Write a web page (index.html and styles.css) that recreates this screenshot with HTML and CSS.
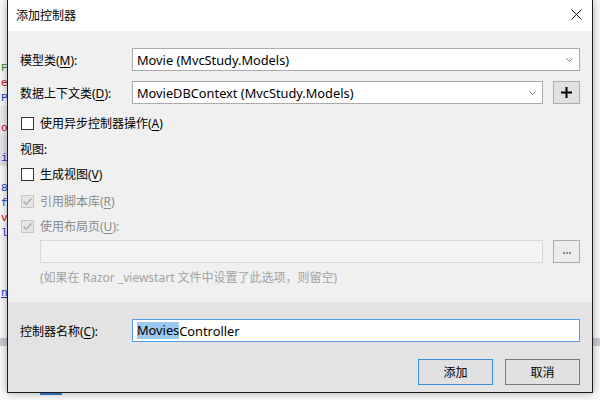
FILE: index.html
```html
<!DOCTYPE html>
<html lang="zh-CN">
<head>
<meta charset="utf-8">
<title>添加控制器</title>
<link rel="stylesheet" href="styles.css">
</head>
<body>
<div class="desktop">
  <div class="code">
    <div class="ln"></div>
    <div class="ln"></div>
    <div class="ln"></div>
    <div class="ln"></div>
    <div class="ln g">F</div>
    <div class="ln"><span class="r">e</span><span class="b">=</span></div>
    <div class="ln b">Pu</div>
    <div class="ln band"></div>
    <div class="ln band r">or</div>
    <div class="ln band2"></div>
    <div class="ln band2 b">ie</div>
    <div class="ln"></div>
    <div class="ln b">8.</div>
    <div class="ln b">f:</div>
    <div class="ln r">vs</div>
    <div class="ln b">le</div>
    <div class="ln"></div>
    <div class="ln"></div>
    <div class="ln"></div>
    <div class="ln b ul">nt</div>
  </div>
  <div class="rband"></div>
  <div class="bseg"></div>

  <div class="dialog">
    <div class="titlebar">
      <span class="title">添加控制器</span>
      <svg class="close" width="11" height="11" viewBox="0 0 11 11"><path d="M0.5 0.5 L10.5 10.5 M10.5 0.5 L0.5 10.5" stroke="#1a1a1a" stroke-width="1" fill="none"/></svg>
    </div>
    <div class="content">
      <div class="row">
        <span class="lbl">模型类(<u>M</u>):</span>
        <div class="combo"><span class="val">Movie (MvcStudy.Models)</span><svg class="chev" width="7" height="4" viewBox="0 0 7 4"><path d="M0.5 0.5 L3.5 3.5 L6.5 0.5" stroke="#7a7a7a" fill="none"/></svg></div>
      </div>
      <div class="row row2">
        <span class="lbl">数据上下文类(<u>D</u>):</span>
        <div class="combo"><span class="val">MovieDBContext (MvcStudy.Models)</span><svg class="chev" width="7" height="4" viewBox="0 0 7 4"><path d="M0.5 0.5 L3.5 3.5 L6.5 0.5" stroke="#7a7a7a" fill="none"/></svg></div>
        <div class="sqbtn plus"><svg width="11" height="11" viewBox="0 0 11 11"><path d="M5.5 0 V11 M0 5.5 H11" stroke="#000" stroke-width="2"/></svg></div>
      </div>
      <div class="check c-async"><span class="box"></span><span>使用异步控制器操作(<u>A</u>)</span></div>
      <div class="section">视图:</div>
      <div class="check c-gen"><span class="box"></span><span>生成视图(<u>V</u>)</span></div>
      <div class="check c-ref disabled"><span class="box on"><svg width="11" height="11" viewBox="0 0 11 11"><path d="M1.5 5.5 L4.2 8.3 L9.5 2.5" stroke="#b4b4b4" stroke-width="1.8" fill="none"/></svg></span><span>引用脚本库(<u>R</u>)</span></div>
      <div class="check c-lay disabled"><span class="box on"><svg width="11" height="11" viewBox="0 0 11 11"><path d="M1.5 5.5 L4.2 8.3 L9.5 2.5" stroke="#b4b4b4" stroke-width="1.8" fill="none"/></svg></span><span>使用布局页(<u>U</u>):</span></div>
      <div class="layrow">
        <div class="dinput"></div>
        <div class="sqbtn dots"><svg width="8" height="3" viewBox="0 0 8 3"><rect x="0" y="0" width="2" height="2" fill="#7d8aa0"/><rect x="3" y="0" width="2" height="2" fill="#9a8a80"/><rect x="6" y="0" width="2" height="2" fill="#7d8aa0"/></svg></div>
      </div>
      <div class="note">(如果在 Razor _viewstart 文件中设置了此选项，则留空)</div>
    </div>
    <div class="footer">
      <div class="row">
        <span class="lbl">控制器名称(<u>C</u>):</span>
        <div class="input"><span class="sel">Movies</span>Controller</div>
      </div>
      <div class="buttons">
        <div class="btn default">添加</div>
        <div class="btn">取消</div>
      </div>
    </div>
  </div>
</div>
</body>
</html>
```
FILE: styles.css
```css
html, body {
  margin: 0;
  padding: 0;
}
body {
  width: 600px;
  height: 400px;
  overflow: hidden;
  font-family: "Noto Sans", "Noto Sans CJK SC", sans-serif;
  font-size: 12px;
  color: #000;
}
.desktop {
  position: relative;
  width: 600px;
  height: 400px;
  background: #fbfbfb;
  overflow: hidden;
}
.code {
  font-family: "Liberation Mono", monospace;
  font-size: 11px;
  line-height: 15px;
  padding-top: 1px;
  width: 7px;
  overflow: hidden;
  white-space: nowrap;
}
.code .ln {
  height: 15px;
  padding-left: 1px;
}
.code .band { background: #eeeef2; }
.code .band2 { background: #e4e4ea; }
.code .g { color: #1f8a1f; }
.code .r { color: #c00; }
.code .b { color: #1a3bd6; }
.code .ul { text-decoration: underline; }
.rband {
  position: absolute;
  left: 0;
  top: 338px;
  width: 600px;
  height: 8px;
  background: #cbcbd4;
}
.bseg {
  position: absolute;
  left: 40px;
  top: 393px;
  width: 22px;
  height: 2px;
  background: #3c7fd0;
}
.dialog {
  position: absolute;
  left: 7px;
  top: 0;
  width: 586px;
  height: 393px;
  box-sizing: border-box;
  border: 1px solid #1b1b1b;
  border-top: none;
  background: #f0f0f0;
  box-shadow: 0 0 9px rgba(0, 0, 0, 0.35);
  display: flex;
  flex-direction: column;
}
.titlebar {
  height: 31px;
  background: #fff;
  display: flex;
  align-items: center;
  justify-content: space-between;
  padding: 0 10px 0 8px;
  flex: none;
}
.title {
  font-size: 12px;
  margin-top: -2px;
}
.close {
  display: block;
  margin-top: -2px;
}
.content {
  height: 271px;
  box-sizing: border-box;
  padding: 17px 12px 0 12px;
  background: #f0f0f0;
  flex: none;
}
.row {
  display: flex;
  align-items: center;
  height: 23px;
}
.row2 {
  margin-top: 10px;
}
.lbl {
  width: 112px;
  flex: none;
}
u {
  text-decoration: underline;
  text-underline-offset: 2px;
}
.combo, .input {
  flex: 1;
  height: 23px;
  box-sizing: border-box;
  background: #fff;
  border: 1px solid #ababab;
  display: flex;
  align-items: center;
  padding: 0 6px 0 4px;
}
.combo .val {
  flex: 1;
  font-size: 12.8px;
}
.chev {
  display: block;
}
.sqbtn {
  width: 27px;
  height: 23px;
  box-sizing: border-box;
  border: 1px solid #adadad;
  background: #e1e1e1;
  margin-left: 10px;
  display: flex;
  align-items: center;
  justify-content: center;
  flex: none;
}
.sqbtn.dots {
  background: #ececec;
  align-items: flex-end;
  padding-bottom: 7px;
}
.check {
  display: flex;
  align-items: center;
  height: 16px;
  padding-left: 1px;
}
.check .box {
  width: 13px;
  height: 13px;
  box-sizing: border-box;
  border: 1px solid #333;
  background: #fff;
  margin-right: 6px;
  display: flex;
  align-items: center;
  justify-content: center;
  flex: none;
}
.check.disabled {
  color: #8a8a8a;
}
.check .box.on {
  border-color: #c6c6c6;
  background: #e6e6e6;
}
.c-async { margin-top: 11px; }
.section {
  margin-top: 11px;
  height: 16px;
  line-height: 16px;
}
.c-gen { margin-top: 8px; }
.c-ref { margin-top: 11px; }
.c-lay { margin-top: 9px; }
.layrow {
  display: flex;
  margin-top: 6px;
  padding-left: 20px;
  height: 23px;
}
.dinput {
  flex: 1;
  height: 23px;
  box-sizing: border-box;
  border: 1px solid #d9d9d9;
  background: #f4f4f4;
}
.note {
  margin-top: 7px;
  padding-left: 20px;
  height: 16px;
  line-height: 16px;
  color: #a3a3a3;
}
.footer {
  flex: 1;
  background: #e3e3e3;
  padding: 17px 12px 0 12px;
}
.input {
  border-color: #569de5;
  font-size: 12.8px;
  padding-left: 4px;
}
.sel {
  background: #9ac8ef;
  line-height: 17px;
}
.buttons {
  display: flex;
  justify-content: flex-end;
  gap: 12px;
  margin-top: 17px;
}
.btn {
  width: 75px;
  height: 26px;
  box-sizing: border-box;
  border: 1px solid #7a7a7a;
  background: #e1e1e1;
  display: flex;
  align-items: center;
  justify-content: center;
}
.btn.default {
  border-color: #3d8ee6;
}
```
